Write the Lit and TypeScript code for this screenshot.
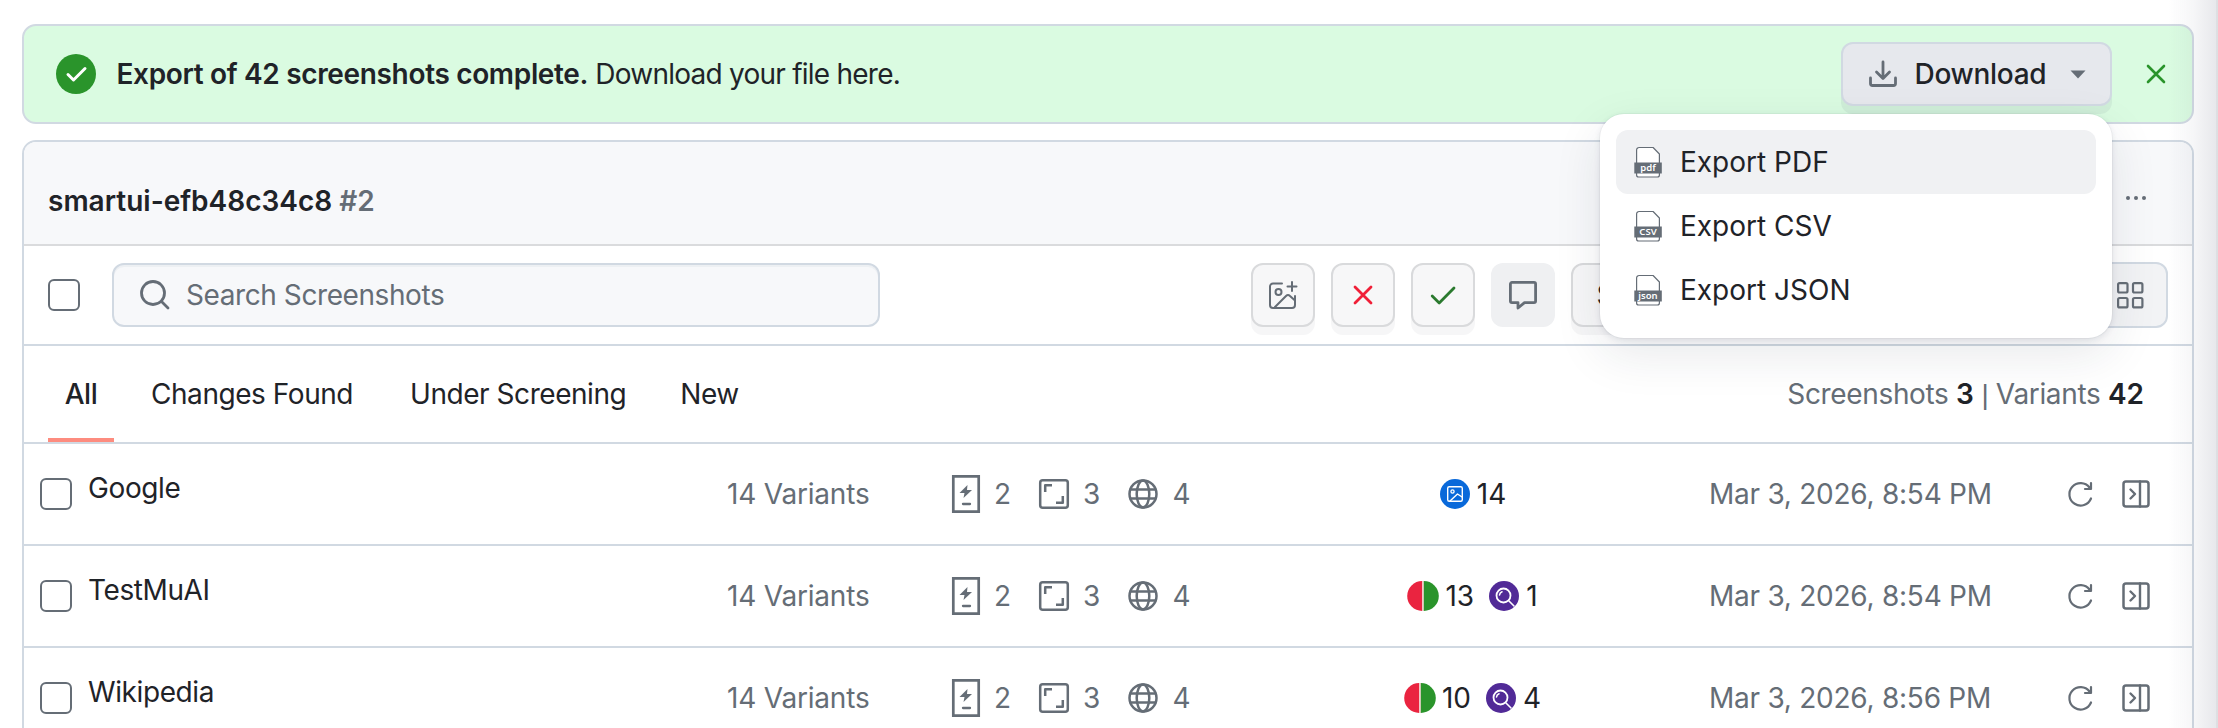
import { LitElement, html, css, svg, nothing } from "lit";
import { customElement } from "lit/decorators.js";

const rows = [
  { name: "Google", time: "Mar 3, 2026, 8:54 PM", fresh: 14 },
  { name: "TestMuAI", time: "Mar 3, 2026, 8:54 PM", approved: 13, review: 1 },
  { name: "Wikipedia", time: "Mar 3, 2026, 8:56 PM", approved: 10, review: 4 },
];

const g = "#656d76";
const icon = (w: number, h: number, body: unknown, cls = "") =>
  html`<svg class=${cls} width=${w} height=${h} viewBox="0 0 ${w} ${h}" fill="none" stroke-linecap="round" stroke-linejoin="round">${body}</svg>`;

const fileIcon = (label: string) => icon(28, 32, svg`
  <path d="M2.6 17V4a2.500 2.500 0 0 1 2.500-2.500h14l6.300 6.500V17" stroke=${g} stroke-width="1.2" fill="#fff"/>
  <path d="M2.6 27v2a2 2 0 0 0 2 2h18.800a2 2 0 0 0 2-2V27" stroke=${g} stroke-width="1.2" fill="#fff"/>
  <rect x="0.3" y="16.500" width="27.500" height="11" fill=${g}/>
  <text x="14" y="24.800" text-anchor="middle" class="tag" fill="#fff">${label}</text>`);

@customElement("app-root")
export class AppRoot extends LitElement {
  static styles = css`
    :host { display: block; height: 728px; overflow: hidden; position: relative; background: #fff;
      font-family: Inter, "Noto Sans", sans-serif; font-size: 28px; line-height: 40px; color: #1f2328; box-sizing: border-box; }
    *, *::before { box-sizing: border-box; }
    svg { display: block; flex: none; overflow: visible; }
    .page { padding: 24px 24px 0 22px; display: flex; flex-direction: column; gap: 16px; }
    .banner { height: 100px; border: 2px solid #d1d9e2; border-radius: 14px; background: #dafbe1;
      display: flex; align-items: center; padding: 0 27px 0 32px; }
    .msg { margin-left: 20.5px; flex: 1; white-space: nowrap; letter-spacing: -0.76px; }
    .m1 { letter-spacing: -0.34px; }
    b, .semi { font-weight: 600; }
    .dl { width: 271px; height: 64px; border: 2px solid #d1d9e2; border-radius: 12px; background: #e6e8ed; display: flex;
      align-items: center; padding: 0 24px 0 26px; font-weight: 500; box-shadow: 0 8px 0 rgba(31,35,80,.06); }
    .dl span { margin-left: 17.500px; flex: 1; letter-spacing: -0.3px; }
    .x { margin-left: 35px; }
    .panel { height: 640px; border: 2px solid #d1d9e2; border-radius: 14px; }
    .head { height: 104px; background: #f7f8fa; border-bottom: 2px solid #dadbdd; border-radius: 12px 12px 0 0;
      display: flex; align-items: center; justify-content: space-between; padding: 15px 46px 0 24px; }
    .muted { color: #656d76; }
    .dots { margin-bottom: 5px; }
    .tools { height: 100px; border-bottom: 2px solid #d1d9e2; display: flex; align-items: center; padding: 0 24px; }
    .check { width: 32px; height: 32px; border: 2px solid #656d76; border-radius: 6px; flex: none; }
    .search { margin-left: 32px; width: 768px; height: 64px; border: 2px solid #d1d9e2; border-radius: 12px;
      background: #f7f8fa; box-shadow: inset 0 2px 0 rgba(208,215,222,.25); display: flex; align-items: center; padding-left: 25.500px; color: #656d76; }
    .search span { margin-left: 16.500px; letter-spacing: -0.42px; }
    .acts { margin-left: 371px; display: flex; gap: 16px; flex: 1; }
    .btn { width: 64px; height: 64px; border: 2px solid #d9dadc; border-radius: 12px; background: #f7f7f8; display: flex;
      align-items: center; justify-content: center; box-shadow: 0 8px 0 rgba(31,35,40,.04); }
    .btn.flat { background: #eff0f2; border: 0; box-shadow: none; }
    .btn.wide { width: 160px; justify-content: flex-start; padding-left: 23.500px; }
    .grid { width: 150px; height: 66px; border: 2px solid #d1d9e2; border-radius: 12px; background: #f2f3f5;
      display: flex; align-items: center; justify-content: flex-end; padding-right: 22px; }
    .tabs { height: 98px; border-bottom: 2px solid #d1d9e2; display: flex; align-items: stretch; padding: 0 48px 0 24px; line-height: 97px; }
    .tab { white-space: nowrap; letter-spacing: -0.45px; }
    .tab.on { font-weight: 500; width: 66px; text-align: center; border-bottom: 4px solid #fd8c7f; margin-right: 37px; }
    .gap { margin-right: 57px; } .gap2 { margin-right: 54px; }
    .counts { margin-left: auto; letter-spacing: -0.35px; }
    .counts b { color: #1f2328; letter-spacing: 0; }
    .bar { font-family: "Liberation Sans", sans-serif; line-height: 1; }
    .row { height: 102px; border-bottom: 2px solid #d1d9e2; display: grid; align-items: center;
      grid-template-columns: 48px 639px 225px 285px 472px 358px 55px 30px; padding-left: 16px; }
    .name { padding-bottom: 12px; letter-spacing: -0.4px; }
    .variants { letter-spacing: -0.2px; }
    .time { letter-spacing: -0.25px; }
    .meta { display: flex; align-items: center; }
    .meta span { margin: 0 28px 0 14px; }
    .status { display: flex; align-items: center; justify-content: center; gap: 15px; }
    .status span { display: flex; align-items: center; gap: 7px; }
    .menu { position: absolute; left: 1600px; top: 114px; width: 512px; height: 224px; border-radius: 24px; background: #fff;
      padding: 16px; box-shadow: 0 0 0 1px rgba(31,35,40,.03), 0 2px 6px rgba(31,35,80,.1), 0 16px 48px rgba(31,35,60,.1); }
    .item { height: 64px; border-radius: 12px; display: flex; align-items: center; padding-left: 18px; gap: 18px; }
    .item.hot { background: #f0f1f3; }
    .tag { font: 600 9.500px "Noto Sans", sans-serif; }
    .edge { position: absolute; right: 0; top: 0; width: 50px; height: 728px; border-right: 2px solid rgba(90,95,110,.2);
      background: linear-gradient(90deg, rgba(90,95,120,0), rgba(90,95,120,.05) 50%, rgba(90,95,120,.14)); }
  `;

  render() {
    return html`
      <div class="page">
        <div class="banner">
          ${icon(40, 40, svg`<circle cx="20" cy="20" r="20" fill="#2a942b"/><path d="M12 20.5l5.5 5.5L29 14.5" stroke="#fff" stroke-width="3"/>`)}
          <div class="msg"><span class="semi m1">Export of 42 screenshots complete.</span> Download your file here.</div>
          <div class="dl">
            ${icon(28, 26, svg`<path d="M14 1v16M7.5 11l6.5 6.5 6.5-6.5M1.5 17v5.500a2 2 0 0 0 2 2h21a2 2 0 0 0 2-2V17" stroke=${g} stroke-width="2.8"/>`)}
            <span>Download</span>
            ${icon(16, 9, svg`<path d="M0.500 0.500h15l-7.500 8z" fill=${g}/>`)}
          </div>
          ${icon(18, 18, svg`<path d="M1 1l16 16M17 1L1 17" stroke="#2a942b" stroke-width="2.6"/>`, "x")}
        </div>
        <div class="panel">
          <div class="head">
            <div class="semi">smartui-efb48c34c8 <span class="muted">#2</span></div>
            ${icon(20, 4, svg`<circle cx="2" cy="2" r="2" fill=${g}/><circle cx="10" cy="2" r="2" fill=${g}/><circle cx="18" cy="2" r="2" fill=${g}/>`, "dots")}
          </div>
          <div class="tools">
            <div class="check"></div>
            <div class="search">
              ${icon(30, 30, svg`<circle cx="13" cy="13" r="11.500" stroke=${g} stroke-width="2.800"/><path d="M21.500 21.500l6.500 6.500" stroke=${g} stroke-width="2.800"/>`)}
              <span>Search Screenshots</span>
            </div>
            <div class="acts">
              <div class="btn">${icon(28, 28, svg`<path d="M13 2.500H4a3 3 0 0 0-3 3V24a3 3 0 0 0 3 3h19a3 3 0 0 0 3-3V15M6 26L17 15q2-2 4 0l5 4.500M23 1v9M18.500 5.500h9" stroke=${g} stroke-width="2"/><circle cx="9.500" cy="11" r="3" stroke=${g} stroke-width="2"/>`)}</div>
              <div class="btn">${icon(18, 18, svg`<path d="M1 1l16 16M17 1L1 17" stroke="#f01f38" stroke-width="2.800"/>`)}</div>
              <div class="btn">${icon(24, 18, svg`<path d="M1.200 10l7 7L23 2" stroke="#2b7a2f" stroke-width="2.800"/>`)}</div>
              <div class="btn flat">${icon(28, 28, svg`<path d="M3 1.400h22a1.600 1.600 0 0 1 1.600 1.600v17a1.600 1.600 0 0 1-1.600 1.600h-9.500L9 27v-5.400H3A1.600 1.600 0 0 1 1.400 20V3A1.600 1.600 0 0 1 3 1.400z" stroke=${g} stroke-width="2.800"/>`)}</div>
              <div class="btn wide">S</div>
            </div>
            <div class="grid">${icon(27, 27, svg`${[1.1, 16].map((y) => [1.1, 16].map((x) => svg`<rect x=${x} y=${y} width="9.400" height="9.400" rx="1.500" stroke=${g} stroke-width="2.200"/>`))}`)}</div>
          </div>
          <div class="tabs">
            <div class="tab on">All</div>
            <div class="tab gap">Changes Found</div>
            <div class="tab gap2">Under Screening</div>
            <div class="tab">New</div>
            <div class="counts muted">Screenshots <b>3</b> <span class="bar">|</span> Variants <b>42</b></div>
          </div>
          ${rows.map((r) => html`<div class="row">
            <div class="check"></div>
            <div class="name">${r.name}</div>
            <div class="variants muted">14 Variants</div>
            <div class="meta muted">
              ${icon(28, 38, svg`<path d="M1.300 1.300h25.400v35.400H1.300z" stroke=${g} stroke-width="2.700" stroke-linejoin="miter"/><path d="M15.500 10l-8 8h5l-1 5 8.500-8h-5z" fill=${g}/><path d="M11 29h7" stroke=${g} stroke-width="2.300"/>`)}<span>2</span>
              ${icon(30, 30, svg`<rect x="1.200" y="1.200" width="27.600" height="27.600" rx="2.500" stroke=${g} stroke-width="2.500"/><path d="M6.200 13V6.200H13M17 23.800h6.800V17" stroke=${g} stroke-width="2.500" stroke-linecap="butt"/>`)}<span>3</span>
              ${icon(30, 30, svg`<circle cx="15" cy="15" r="13.500" stroke=${g} stroke-width="2.500"/><ellipse cx="15" cy="15" rx="6.300" ry="13.500" stroke=${g} stroke-width="2.500"/><path d="M2.500 10.500h25M2.500 19.500h25" stroke=${g} stroke-width="2.300"/>`)}<span>4</span>
            </div>
            <div class="status">
              ${r.fresh ? html`<span>${icon(30, 30, svg`<circle cx="15" cy="15" r="15" fill="#0969da"/><rect x="7.700" y="7.700" width="14.600" height="14.600" rx="1.500" stroke="#fff" stroke-width="1.400"/><circle cx="12.500" cy="12.500" r="1.600" stroke="#fff" stroke-width="1.300"/><path d="M10 22l7.500-7 4.500 3" stroke="#fff" stroke-width="1.400"/>`)}${r.fresh}</span>` : nothing}
              ${r.approved ? html`<span>${icon(30, 30, svg`<path d="M14.200 0a15 15 0 0 0 0 30z" fill="#ea2440"/><path d="M14.200 0h1.600v30h-1.600z" fill="#f0c9c4"/><path d="M15.800 0a15 15 0 0 1 0 30z" fill="#2a942b"/>`)}${r.approved}</span>` : nothing}
              ${r.review ? html`<span>${icon(30, 30, svg`<circle cx="15" cy="15" r="15" fill="#512a97"/><circle cx="14.500" cy="14.500" r="7" stroke="#fff" stroke-width="1.800"/><path d="M20 20l5 5M10.500 14q.3-2.500 2.500-3.200" stroke="#fff" stroke-width="1.600"/>`)}${r.review}</span>` : nothing}
            </div>
            <div class="time muted">${r.time}</div>
            ${icon(26, 26, svg`<path d="M24 17.500A11.200 11.200 0 1 1 22.500 6.500M24 2v6h-6" stroke=${g} stroke-width="2.200"/>`)}
            ${icon(28, 28, svg`<rect x="1.500" y="1.500" width="25" height="25" rx="2.500" stroke=${g} stroke-width="2.500"/><path d="M18 1.500v25M8.500 9.500L13 14l-4.500 4.500" stroke=${g} stroke-width="2.400"/>`)}
          </div>`)}
        </div>
      </div>
      <div class="menu">
        ${["PDF", "CSV", "JSON"].map((t, i) => html`<div class="item ${i === 0 ? "hot" : ""}">${fileIcon(t === "CSV" ? "CSV" : t.toLowerCase())}<span>Export ${t}</span></div>`)}
      </div>
      <div class="edge"></div>`;
  }
}
